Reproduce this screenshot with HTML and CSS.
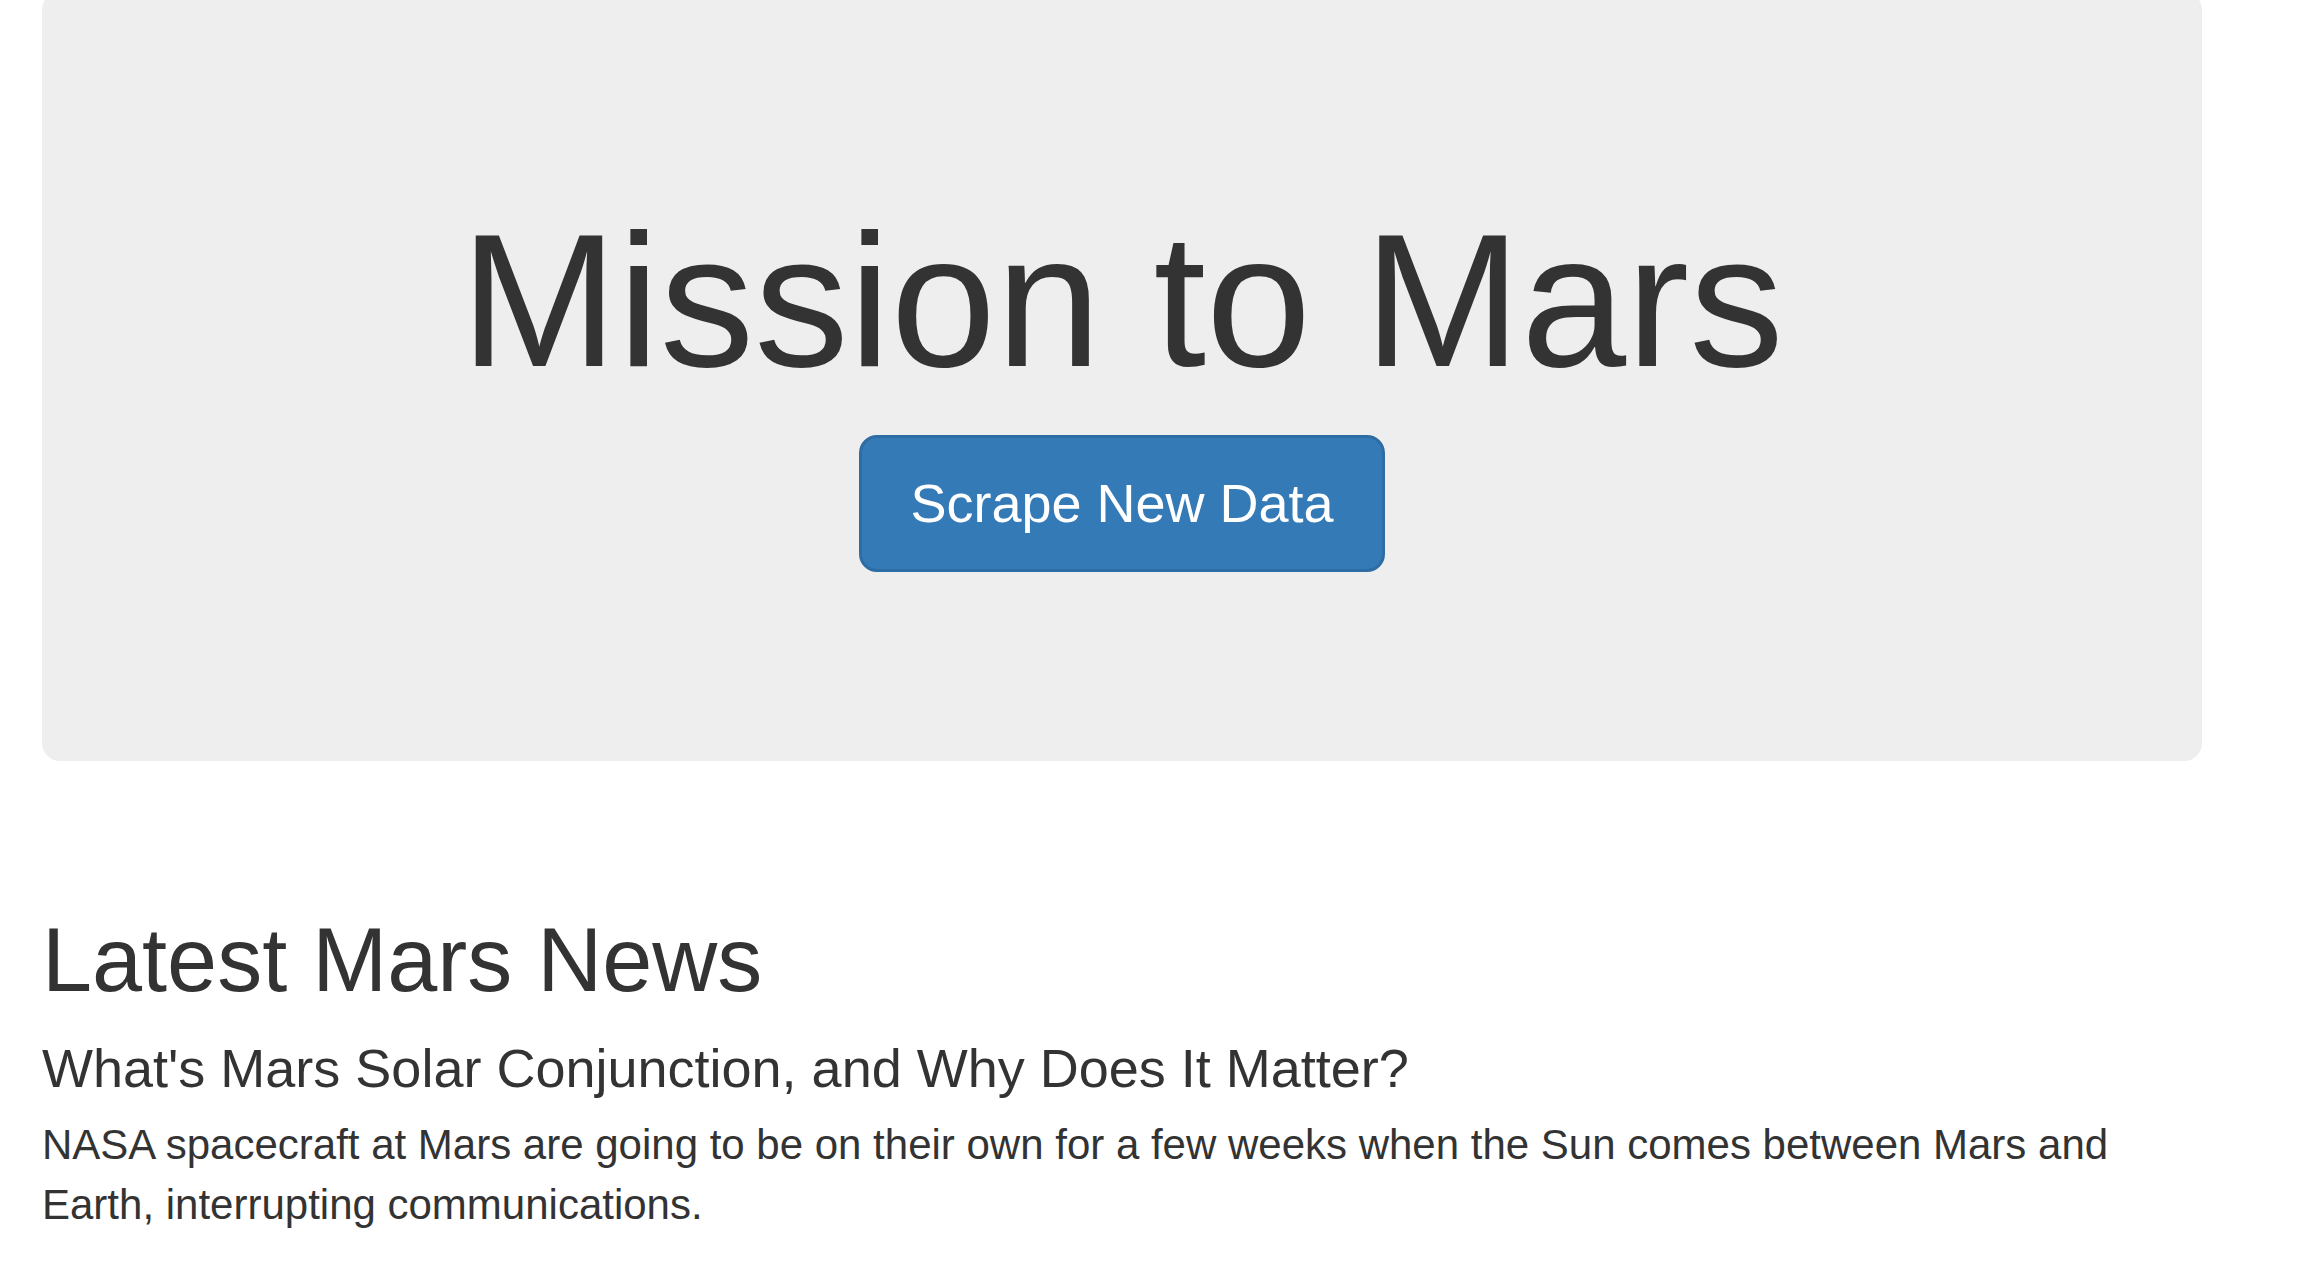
FILE: index.html
```html
<!DOCTYPE html>
<html lang="en">
<head>
<meta charset="utf-8">
<title>Mission to Mars</title>
<link rel="stylesheet" href="styles.css">
</head>
<body>
<div class="page">
  <div class="jumbotron">
    <h1 class="title">Mission to Mars</h1>
    <a class="btn" href="#">Scrape New Data</a>
  </div>
  <section class="news">
    <h2 class="news-heading">Latest Mars News</h2>
    <h4 class="news-title">What's Mars Solar Conjunction, and Why Does It Matter?</h4>
    <p class="news-body">NASA spacecraft at Mars are going to be on their own for a few weeks when the Sun comes between Mars and Earth, interrupting communications.</p>
  </section>
</div>
</body>
</html>
```

FILE: styles.css
```css
html, body {
  margin: 0;
  padding: 0;
  background: #fff;
}

body {
  font-family: "Liberation Sans", Arial, Helvetica, sans-serif;
  color: #333;
  overflow: hidden;
}

.page {
  width: 2160px;
  margin-left: 42px;
}

.jumbotron {
  margin-top: -8px;
  background: #eee;
  border-radius: 18px;
  padding: 205px 0 189px;
  display: flex;
  flex-direction: column;
  align-items: center;
}

.title {
  margin: 0 0 30px;
  font-size: 189px;
  line-height: 1.1;
  font-weight: 400;
}

.btn {
  display: inline-block;
  font-size: 54px;
  line-height: 71px;
  padding: 30px 48px;
  color: #fff;
  background: #337ab7;
  border: 3px solid #2e6da4;
  border-radius: 18px;
  text-decoration: none;
}

.news {
  padding-top: 150px;
}

.news-heading {
  margin: 0;
  font-size: 90px;
  line-height: 1.1;
  font-weight: 400;
}

.news-title {
  margin: 29px 0 0;
  font-size: 54px;
  line-height: 1.1;
  font-weight: 400;
}

.news-body {
  margin: 17px 0 0;
  font-size: 42px;
  line-height: 60px;
}
```
